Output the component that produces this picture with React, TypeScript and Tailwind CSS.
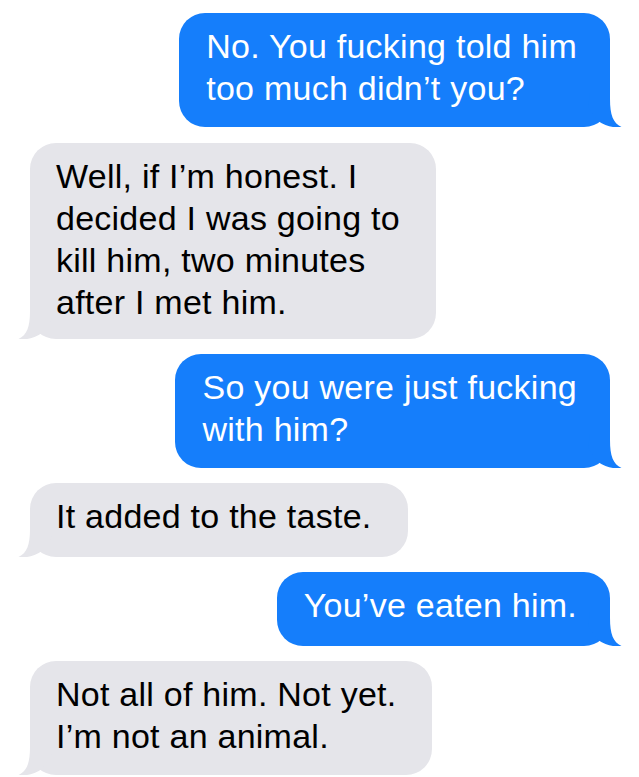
import React from "react";

const BLUE = "#157efb";
const GRAY = "#e5e5ea";

function Tail({ side, color }: { side: "left" | "right"; color: string }) {
  return (
    <svg
      width="42"
      height="40"
      viewBox="0 0 42 40"
      className={
        side === "right"
          ? "absolute bottom-0 right-[-12px]"
          : "absolute bottom-0 left-[-12px] -scale-x-100"
      }
    >
      <path
        d="M30 6 L30 12 C30 28 33 36 41.5 40 C34 41 26 39.5 18 34 L8 20 L10 6 Z"
        fill={color}
      />
    </svg>
  );
}

function Sent({ lines, pb = "pb-[18px]" }: { lines: string[]; pb?: string }) {
  return (
    <div className={`relative self-end mr-[29px] rounded-[26px] bg-[#157efb] pt-3 ${pb} pl-[27px] pr-[33px] text-white`}>
      <Tail side="right" color={BLUE} />
      <p className="relative whitespace-nowrap">
        {lines.map((l, i) => (
          <React.Fragment key={i}>
            {i > 0 && <br />}
            {l}
          </React.Fragment>
        ))}
      </p>
    </div>
  );
}

function Received({ lines, pb = "pb-[18px]", extra = "" }: { lines: string[]; pb?: string; extra?: string }) {
  return (
    <div className={`relative self-start ml-[30px] rounded-[26px] bg-[#e5e5ea] pt-3 ${pb} pl-[26px] pr-[36px] text-black ${extra}`}>
      <Tail side="left" color={GRAY} />
      <p className="relative whitespace-nowrap">
        {lines.map((l, i) => (
          <React.Fragment key={i}>
            {i > 0 && <br />}
            {l}
          </React.Fragment>
        ))}
      </p>
    </div>
  );
}

export default function App() {
  return (
    <div
      className="flex h-[777px] w-[639px] flex-col gap-[15px] overflow-hidden bg-white pt-[13px] text-[34px] leading-[42px] tracking-[0.25px]"
      style={{ fontFamily: '"Liberation Sans", Arial, sans-serif' }}
    >
      <Sent lines={["No. You fucking told him", "too much didn\u2019t you?"]} />
      <Received
        extra="mt-px"
        pb="pb-4"
        lines={[
          "Well, if I\u2019m honest. I",
          "decided I was going to",
          "kill him, two minutes",
          "after I met him.",
        ]}
      />
      <Sent lines={["So you were just fucking", "with him?"]} />
      <Received pb="pb-5" lines={["It added to the taste."]} />
      <Sent pb="pb-5" lines={["You\u2019ve eaten him."]} />
      <Received lines={["Not all of him. Not yet.", "I\u2019m not an animal."]} />
    </div>
  );
}
